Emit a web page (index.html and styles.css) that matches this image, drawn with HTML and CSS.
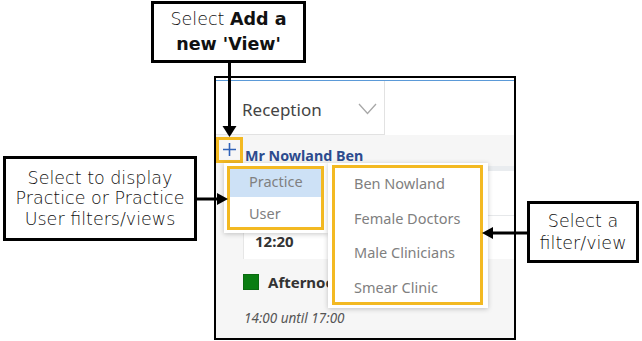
FILE: index.html
```html
<!DOCTYPE html>
<html lang="en">
  <head>
    <meta charset="UTF-8" />
    <title>Add a new View</title>
    <link rel="stylesheet" href="styles.css">
  </head>
  <body>
    <div class="canvas">
      <!-- the app screenshot -->
      <div class="shot">
        <div class="toolbar">
          <div class="blueline"></div>
          <div class="selectrow">
            <div class="select">
              <span>Reception</span>
              <svg class="chevron" width="19" height="12" viewBox="0 0 19 12">
                <polyline points="1,1 9.5,10.5 18,1" fill="none" stroke="#a8a8a8" stroke-width="1.3" />
              </svg>
            </div>
          </div>
        </div>
        <div class="person">
          <div class="addview hilite">
            <svg width="15" height="15" viewBox="0 0 15 15">
              <path d="M7.5 1v13M1 7.5h13" stroke="#2f62b8" stroke-width="1.6" />
            </svg>
          </div>
          <span class="name">Mr Nowland Ben</span>
        </div>
        <div class="cardband"></div>
        <div class="card">
          <div class="cardrow"></div>
          <div class="cardrow slot">12:20</div>
        </div>
        <div class="session">
          <span class="greenbox"></span>
          <span>Afternoon</span>
        </div>
        <div class="time">14:00 until 17:00</div>

        <!-- popups -->
        <div class="popup typemenu">
          <ul class="hilite">
            <li class="on">Practice</li>
            <li>User</li>
          </ul>
        </div>
        <div class="popup viewmenu">
          <ul class="hilite">
            <li>Ben Nowland</li>
            <li>Female Doctors</li>
            <li>Male Clinicians</li>
            <li>Smear Clinic</li>
          </ul>
        </div>
      </div>

      <!-- callouts -->
      <div class="callout c-top"><p>Select <b>Add a<br />new 'View'</b></p></div>
      <div class="callout c-left"><p>Select to display<br />Practice or Practice<br />User filters/views</p></div>
      <div class="callout c-right"><p>Select a<br />filter/view</p></div>

      <svg class="arrows" width="642" height="341" viewBox="0 0 642 341">
        <line x1="229.5" y1="62" x2="229.5" y2="128" stroke="#000" stroke-width="3" />
        <polygon points="222.5,126 236.5,126 229.5,137" fill="#000" />
        <line x1="197" y1="199" x2="219" y2="199" stroke="#000" stroke-width="3" />
        <polygon points="217,193 217,205 228,199" fill="#000" />
        <line x1="528" y1="233" x2="492" y2="233" stroke="#000" stroke-width="3" />
        <polygon points="493,227 493,239 482,233" fill="#000" />
      </svg>
    </div>
  </body>
</html>
```

FILE: styles.css
```css
body {
  margin: 0;
  background: #fff;
}
.canvas {
  position: relative;
  width: 642px;
  height: 341px;
  overflow: hidden;
}
.shot {
  position: absolute;
  left: 214px;
  top: 76px;
  width: 298px;
  height: 260px;
  border: 2px solid #000;
  background: #f6f6f6;
  overflow: hidden;
  font-family: "Noto Sans", "Open Sans", sans-serif;
}
.toolbar {
  background: #fff;
  padding-top: 2px;
}
.blueline {
  height: 1px;
  background: #5b9ad8;
}
.selectrow {
  height: 54px;
  display: flex;
}
.select {
  width: 142px;
  border-right: 1px solid #e2e2e2;
  border-bottom: 1px solid #e2e2e2;
  display: flex;
  align-items: center;
  padding-left: 26px;
  padding-top: 3px;
  color: #444;
  font-size: 17px;
}
.chevron {
  margin-left: 36px;
}
.person {
  display: flex;
  align-items: center;
  height: 29px;
}
.hilite {
  border: 3px solid #f3b922;
}
.addview {
  width: 21px;
  height: 20px;
  display: flex;
  align-items: center;
  justify-content: center;
}
.name {
  margin-left: 2px;
  margin-top: 11px;
  font-weight: bold;
  font-size: 14.3px;
  color: #2d4b8e;
}
.cardband {
  margin-left: 27px;
  margin-top: 2px;
  height: 5px;
  background: #e9ecef;
}
.card {
  margin-left: 27px;
  background: #fff;
  border-left: 1px solid #e6e6e6;
}
.cardrow {
  height: 44px;
  border-bottom: 1px solid #e6e8ea;
}
.slot {
  border-bottom: none;
  padding-left: 11px;
  display: flex;
  align-items: center;
  padding-top: 6px;
  height: 37px;
  font-weight: bold;
  font-size: 15px;
  color: #333;
}
.session {
  display: flex;
  align-items: center;
  margin: 13px 0 0 27px;
  font-weight: bold;
  font-size: 15px;
  color: #333;
}
.greenbox {
  width: 14px;
  height: 14px;
  background: #0a7d12;
  border: 1px solid #0b6a10;
  margin-right: 9px;
}
.time {
  margin: 17px 0 0 28px;
  font-style: italic;
  font-size: 13.5px;
  color: #555;
}
.popup {
  position: absolute;
  top: 85px;
  background: #fff;
  box-shadow: 0 1px 5px rgba(0, 0, 0, 0.22);
  font-size: 14.5px;
  color: #808080;
}
.popup ul {
  list-style: none;
  margin: 0;
  padding: 0;
}
.typemenu {
  left: 8px;
  width: 104px;
  padding: 3px 4px 3px 3px;
  box-sizing: border-box;
  height: 70px;
}
.typemenu li {
  height: 28px;
  line-height: 25px;
  padding-left: 19px;
}
.typemenu li.on {
  background: #cde1f6;
}
.typemenu li + li {
  height: 30px;
  line-height: 33px;
}
.viewmenu {
  left: 112px;
  width: 160px;
  height: 145px;
  padding: 2px 5px 3px 4px;
  box-sizing: border-box;
}
.viewmenu ul {
  height: 134px;
}
.viewmenu li {
  height: 34.5px;
  line-height: 31px;
  padding-left: 19px;
}
.callout {
  position: absolute;
  border: 3px solid #000;
  background: #fff;
  box-sizing: border-box;
  display: flex;
  align-items: center;
  justify-content: center;
  text-align: center;
  font-family: "DejaVu Sans", sans-serif;
  font-weight: 300;
  font-size: 17.5px;
  line-height: 20.5px;
  color: #111;
}
.callout p {
  margin: 0;
}
.callout b {
  font-weight: bold;
}
.c-top {
  left: 151px;
  top: 1px;
  width: 155px;
  height: 62px;
  line-height: 25px;
}
.c-left {
  left: 3px;
  top: 156px;
  width: 194px;
  height: 85px;
}
.c-right {
  left: 527px;
  top: 201px;
  width: 112px;
  height: 62px;
  line-height: 22px;
}
.arrows {
  position: absolute;
  left: 0;
  top: 0;
}
```
